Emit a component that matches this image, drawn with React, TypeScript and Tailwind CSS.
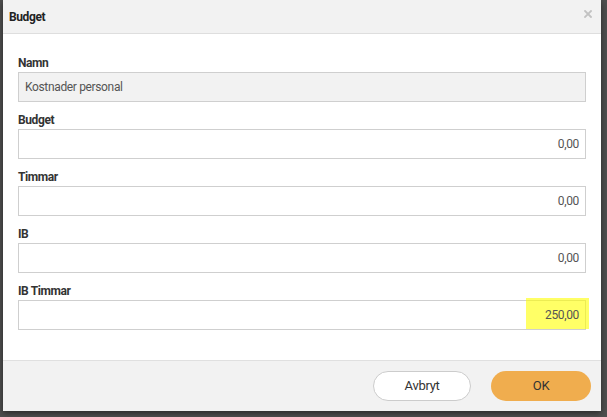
import React from "react";

const font = { fontFamily: "Roboto, 'Liberation Sans', sans-serif" };

function Field({ label, value, disabled, highlight }: { label: string; value: string; disabled?: boolean; highlight?: boolean }) {
  return (
    <div className="flex flex-col">
      <div className="h-[16px] text-[12px] font-bold leading-[14px] text-[#333] tracking-[-0.4px]">{label}</div>
      <div className="relative">
        <div
          className={`h-[30px] border border-[#cfcfcf] flex items-center px-[6px] text-[12px] text-[#555] tracking-[-0.35px]
            ${disabled ? "bg-[#f2f2f2] justify-start" : "bg-white justify-end"}`}
        >
          {highlight && <div className="absolute right-[-3px] top-[-2px] w-[63px] h-[31px] bg-[#ffff00]/60" />}
          <span className="relative">{value}</span>
        </div>
      </div>
    </div>
  );
}

export default function App() {
  return (
    <div className="w-[607px] h-[417px] bg-[#4f4f4f] pl-[3px] pr-[6px] pb-[6px] overflow-hidden" style={font}>
      <div className="h-[411px] bg-white flex flex-col shadow-[0_2px_6px_rgba(0,0,0,0.5)] rounded-tr-[4px]">
        <div className="h-[34px] shrink-0 bg-[#f2f2f2] border-b border-[#dedede] flex items-center justify-between pl-[6px] pr-[9px]">
          <span className="text-[12px] font-bold text-[#222] tracking-[-0.4px]">Budget</span>
          <svg width="8" height="8" viewBox="0 0 8 8" className="mb-[6px]">
            <path d="M1 1 L7 7 M7 1 L1 7" stroke="#c2c2c2" strokeWidth="1.8" strokeLinecap="square" />
          </svg>
        </div>
        <div className="flex-1 px-[15px] pt-[22px] flex flex-col gap-[11px]">
          <Field label="Namn" value="Kostnader personal" disabled />
          <Field label="Budget" value="0,00" />
          <Field label="Timmar" value="0,00" />
          <Field label="IB" value="0,00" />
          <Field label="IB Timmar" value="250,00" highlight />
        </div>
        <div className="h-[51px] shrink-0 bg-[#f2f2f2] border-t border-[#e0e0e0] flex items-center justify-end gap-[20px] pr-[10px]">
          <button className="w-[98px] h-[30px] rounded-full bg-white border border-[#cccccc] text-[13px] text-[#333] tracking-[-0.3px]">Avbryt</button>
          <button className="w-[100px] h-[30px] rounded-full bg-[#f0ad4e] text-[13px] text-[#333] tracking-[-0.3px]">OK</button>
        </div>
      </div>
    </div>
  );
}
